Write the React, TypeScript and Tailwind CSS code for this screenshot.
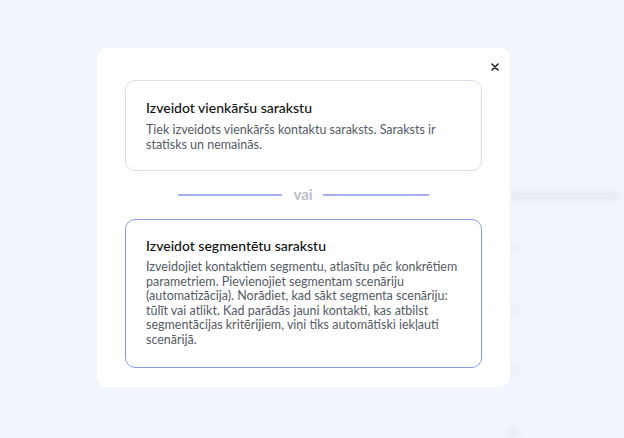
import React from 'react';

const App: React.FC = () => {
  return (
    <div
      className="relative w-[624px] h-[438px] overflow-hidden bg-[#f1f6fc]"
      style={{ fontFamily: 'Lato, "Noto Sans", sans-serif' }}
    >
      {/* blurred page behind the overlay */}
      <div className="absolute inset-0 blur-[3px] pointer-events-none">
        <div className="absolute left-[510px] top-[192px] w-[110px] h-[8px] rounded bg-[#e4e8ef]" />
        <div className="absolute left-[510px] top-[243px] w-[8px] h-[8px] rounded-full bg-[#e6eaf1]" />
        <div className="absolute left-[510px] top-[305px] w-[8px] h-[8px] rounded-full bg-[#e6eaf1]" />
        <div className="absolute left-[510px] top-[367px] w-[8px] h-[8px] rounded-full bg-[#e6eaf1]" />
        <div className="absolute left-[508px] top-[427px] w-[10px] h-[10px] rounded-full bg-[#e3e7ee]" />
      </div>

      <div className="relative pt-[48px] pl-[97px]">
        <div className="relative w-[413px] bg-white rounded-[10px] px-[28px] pt-[32px] pb-[19px]">
          <button className="absolute right-[7px] top-[11px] w-[16px] h-[16px] flex items-center justify-center text-[#222]">
            <svg width="8" height="8" viewBox="0 0 8 8" fill="none">
              <path d="M1 1L7 7M7 1L1 7" stroke="currentColor" strokeWidth="1.6" strokeLinecap="round" />
            </svg>
          </button>

          <div className="rounded-[10px] border border-[#dedcec] px-[20px] pt-[18px] pb-[18px]">
            <h3 className="text-[14px] leading-[18px] font-medium text-[#111]">Izveidot vienkāršu sarakstu</h3>
            <p className="mt-[5px] text-[12.5px] leading-[15px] text-[#555b66]">
              Tiek izveidots vienkāršs kontaktu saraksts. Saraksts ir statisks un nemainās.
            </p>
          </div>

          <div className="flex items-center justify-center h-[48px]">
            <div className="w-[104px] h-[2px] bg-[#a3b1f7]" />
            <span className="ml-[11px] mr-[10px] text-[15px] font-bold text-[#b8c0cc] leading-none pb-[2px]">vai</span>
            <div className="w-[106px] h-[2px] bg-[#a3b1f7]" />
          </div>

          <div className="rounded-[10px] border border-[#8e9ae6] px-[20px] pt-[17px] pb-[19px]">
            <h3 className="text-[14px] leading-[18px] font-medium text-[#111]">Izveidot segmentētu sarakstu</h3>
            <p className="mt-[5px] text-[12.5px] leading-[14.6px] text-[#555b66]">
              Izveidojiet kontaktiem segmentu, atlasītu pēc konkrētiem parametriem. Pievienojiet segmentam scenāriju
              (automatizācija). Norādiet, kad sākt segmenta scenāriju: tūlīt vai atlikt. Kad parādās jauni kontakti, kas
              atbilst segmentācijas kritērijiem, viņi tiks automātiski iekļauti scenārijā.
            </p>
          </div>
        </div>
      </div>
    </div>
  );
};

export default App;
